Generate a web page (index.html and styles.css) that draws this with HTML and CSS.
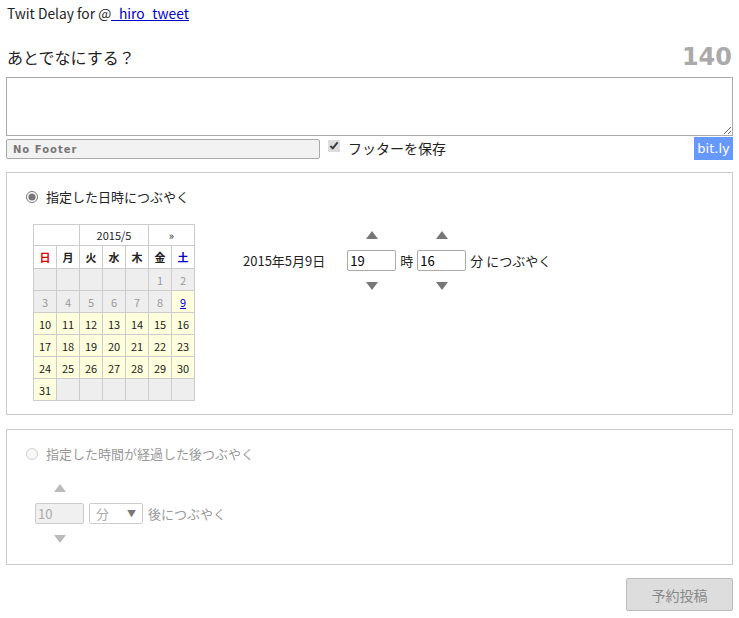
FILE: index.html
```html
<!DOCTYPE html>
<html lang="ja">
<head>
  <meta charset="UTF-8">
  <title>Twit Delay</title>
  <link rel="stylesheet" href="styles.css">
</head>
<body>
  <div class="header">Twit Delay for @<a href="#">_hiro_tweet</a></div>

  <div class="title-row">
    <span class="title">あとでなにする？</span>
    <span class="count">140</span>
  </div>
  <textarea class="tweet"></textarea>

  <div class="footer-row">
    <input class="footer-input" type="text" value="No Footer" disabled>
    <label class="save"><input type="checkbox" checked> フッターを保存</label>
    <button class="bitly">bit.ly</button>
  </div>

  <!-- 日時指定 -->
  <div class="box">
    <label class="radio"><input type="radio" name="mode" checked> 指定した日時につぶやく</label>
    <div class="date-row">
      <table class="cal">
        <tr class="cal-head"><th colspan="2"></th><th colspan="3">2015/5</th><th colspan="2">&raquo;</th></tr>
        <tr class="cal-days"><th class="sun">日</th><th>月</th><th>火</th><th>水</th><th>木</th><th>金</th><th class="sat">土</th></tr>
        <tr><td class="off"></td><td class="off"></td><td class="off"></td><td class="off"></td><td class="off"></td><td class="off">1</td><td class="off">2</td></tr>
        <tr><td class="off">3</td><td class="off">4</td><td class="off">5</td><td class="off">6</td><td class="off">7</td><td class="off">8</td><td><a href="#">9</a></td></tr>
        <tr><td>10</td><td>11</td><td>12</td><td>13</td><td>14</td><td>15</td><td>16</td></tr>
        <tr><td>17</td><td>18</td><td>19</td><td>20</td><td>21</td><td>22</td><td>23</td></tr>
        <tr><td>24</td><td>25</td><td>26</td><td>27</td><td>28</td><td>29</td><td>30</td></tr>
        <tr><td>31</td><td class="off"></td><td class="off"></td><td class="off"></td><td class="off"></td><td class="off"></td><td class="off"></td></tr>
      </table>

      <div class="time">
        <span class="date">2015年5月9日</span>
        <div class="spin">
          <span class="up"></span>
          <input class="num" type="text" value="19">
          <span class="down"></span>
        </div>
        <span>時</span>
        <div class="spin">
          <span class="up"></span>
          <input class="num" type="text" value="16">
          <span class="down"></span>
        </div>
        <span>分 につぶやく</span>
      </div>
    </div>
  </div>

  <!-- 経過時間指定 -->
  <div class="box box-off">
    <label class="radio"><input type="radio" name="mode" disabled> 指定した時間が経過した後つぶやく</label>
    <div class="after-row">
      <div class="spin">
        <span class="up"></span>
        <input class="num" type="text" value="10" disabled>
        <span class="down"></span>
      </div>
      <div class="unit">分<span class="caret">▼</span></div>
      <span>後につぶやく</span>
    </div>
  </div>

  <div class="submit-row">
    <button class="submit" disabled>予約投稿</button>
  </div>
</body>
</html>
```

FILE: styles.css
```css
body {
  margin: 0;
  padding: 0 6px;
  font-family: "Noto Sans CJK JP", "DejaVu Sans", sans-serif;
  font-size: 13px;
  color: #222;
}

.header {
  padding: 5px 1px 0;
  height: 18px;
  line-height: 16px;
  font-size: 13.8px;
}

.header a {
  color: #00c;
}

.title-row {
  display: flex;
  justify-content: space-between;
  align-items: center;
  padding: 17px 1px 0;
  height: 34px;
}

.title {
  font-size: 16px;
}

.count {
  font-family: "DejaVu Sans", sans-serif;
  font-weight: bold;
  font-size: 24px;
  color: #aaa;
}

.tweet {
  display: block;
  box-sizing: border-box;
  width: 727px;
  height: 59px;
  margin: 3px 0 0;
  border: 1px solid #aaa;
  resize: vertical;
}

.footer-row {
  display: flex;
  align-items: flex-start;
  height: 25px;
}

.footer-input {
  box-sizing: border-box;
  width: 314px;
  height: 20px;
  margin-top: 3px;
  padding: 0 6px;
  border: 1px solid #aaa;
  border-radius: 2px;
  background: #f2f2f2;
  color: #777;
  font-family: "DejaVu Sans", sans-serif;
  font-size: 10px;
  font-weight: bold;
  letter-spacing: 1px;
}

.save {
  display: flex;
  align-items: center;
  margin: 2px 0 0 8px;
  font-size: 14px;
}

.save input {
  margin: 0 8px 4px 0;
  width: 12px;
  height: 12px;
  accent-color: #ddd;
}

.bitly {
  margin: 1px 0 0 auto;
  width: 39px;
  height: 23px;
  border: none;
  background: #6699ff;
  color: #fff;
  font-family: "DejaVu Sans", sans-serif;
  font-size: 13px;
  padding: 0;
}

.box {
  margin-top: 11px;
  border: 1px solid #ccc;
  padding: 14px 19px 13px 19px;
}

.radio {
  display: flex;
  align-items: center;
}

.radio input {
  margin: 0 8px 0 0;
  width: 12px;
  height: 12px;
  accent-color: #777;
}

.date-row {
  display: flex;
  align-items: flex-start;
  margin-top: 18px;
  padding-left: 7px;
}

.cal {
  border-collapse: collapse;
  font-size: 11px;
}

.cal th,
.cal td {
  border: 1px solid #ccc;
  width: 22px;
  height: 21px;
  padding: 0;
  text-align: center;
}

.cal td {
  background: #ffffdd;
  color: #222;
}

.cal td.off {
  background: #eee;
  color: #999;
}

.cal td a {
  color: #00c;
}

.cal-head th {
  font-weight: normal;
  height: 20px;
}

.cal-days th {
  font-weight: bold;
  height: 22px;
}

.cal .sun {
  color: #d00;
}

.cal .sat {
  color: #00c;
}

.time {
  display: flex;
  align-items: center;
  gap: 4px;
  margin: 7px 0 0 48px;
}

.date {
  margin-right: 18px;
}

.spin {
  display: flex;
  flex-direction: column;
  align-items: center;
  gap: 11px;
}

.up,
.down {
  width: 0;
  height: 0;
  border-left: 6px solid transparent;
  border-right: 6px solid transparent;
}

.up {
  border-bottom: 8px solid #777;
}

.down {
  border-top: 8px solid #777;
}

.num {
  box-sizing: border-box;
  width: 49px;
  height: 21px;
  padding: 0 2px;
  border: 1px solid #aaa;
  border-radius: 2px;
  font-family: "Noto Sans CJK JP", sans-serif;
  font-size: 13px;
}

.box-off {
  margin-top: 14px;
  color: #999;
  padding-bottom: 21px;
}

.box-off .radio input {
  accent-color: #ccc;
}

.after-row {
  display: flex;
  align-items: center;
  gap: 5px;
  margin-top: 21px;
  padding-left: 9px;
}

.box-off .up {
  border-bottom-color: #bbb;
}

.box-off .down {
  border-top-color: #bbb;
}

.box-off .num {
  background: #f0f0f0;
  border-color: #ccc;
  color: #aaa;
}

.unit {
  box-sizing: border-box;
  display: flex;
  justify-content: space-between;
  align-items: center;
  width: 54px;
  height: 21px;
  padding: 0 6px;
  border: 1px solid #ccc;
  border-radius: 2px;
  color: #aaa;
}

.caret {
  font-size: 9px;
  color: #777;
}

.submit-row {
  display: flex;
  justify-content: flex-end;
  padding: 13px 0 0;
}

.submit {
  width: 107px;
  height: 33px;
  border: 1px solid #bbb;
  border-radius: 2px;
  background: #ddd;
  color: #888;
  font-family: "Noto Sans CJK JP", sans-serif;
  font-size: 14px;
}
```
